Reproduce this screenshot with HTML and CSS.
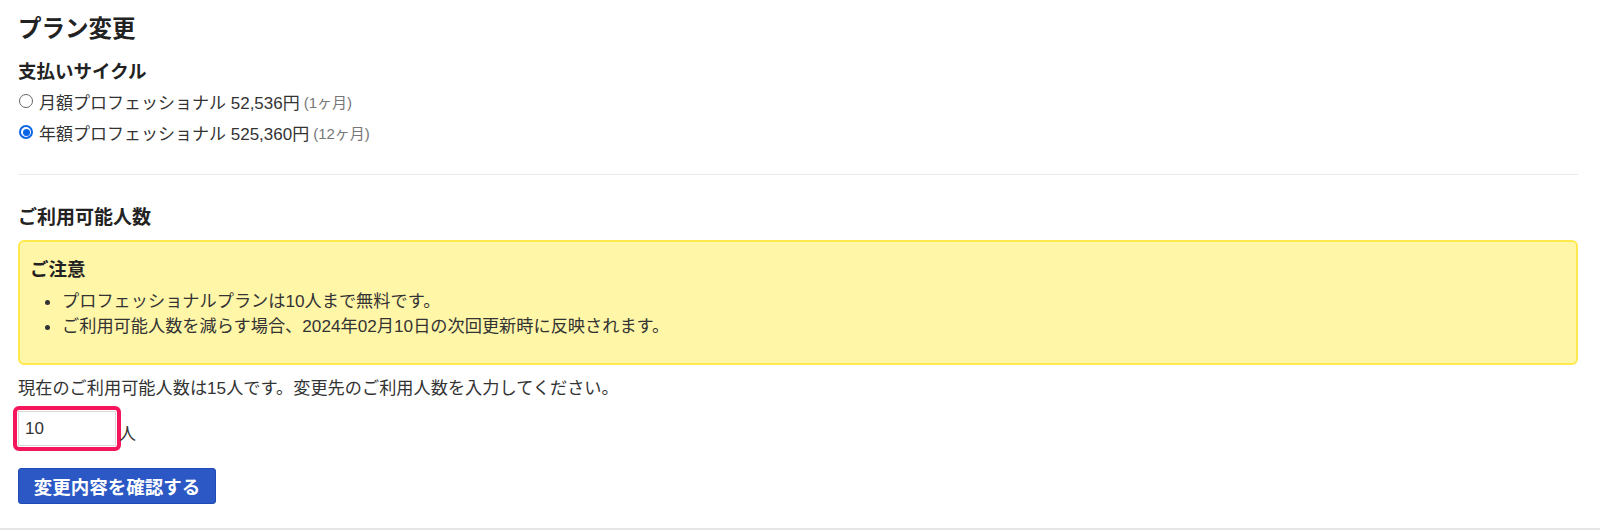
FILE: index.html
```html
<!DOCTYPE html>
<html lang="ja">
<head>
<meta charset="utf-8">
<link rel="stylesheet" href="styles.css">
</head>
<body>
<div class="page">
  <h1 class="title">プラン変更</h1>
  <section class="cycle">
    <h2 class="sub">支払いサイクル</h2>
    <label class="radio-row">
      <span class="radio"></span>
      <span>月額プロフェッショナル 52,536円</span>
      <span class="note">(1ヶ月)</span>
    </label>
    <label class="radio-row">
      <span class="radio checked"></span>
      <span>年額プロフェッショナル 525,360円</span>
      <span class="note">(12ヶ月)</span>
    </label>
  </section>
  <hr class="divider">
  <section class="seats">
    <h3 class="sub3">ご利用可能人数</h3>
    <div class="alert">
      <div class="alert-title">ご注意</div>
      <ul class="alert-list">
        <li>プロフェッショナルプランは10人まで無料です。</li>
        <li>ご利用可能人数を減らす場合、2024年02月10日の次回更新時に反映されます。</li>
      </ul>
    </div>
    <p class="current">現在のご利用可能人数は15人です。変更先のご利用人数を入力してください。</p>
    <div class="input-row">
      <div class="highlight"><span class="field">10</span></div>
      <span class="unit">人</span>
    </div>
    <button class="btn">変更内容を確認する</button>
  </section>
</div>
<div class="footer-line"></div>
</body>
</html>
```

FILE: styles.css
```css
html, body {
  margin: 0;
  padding: 0;
  background: #fff;
}
body {
  font-family: "Liberation Sans", Arial, "Noto Sans CJK JP", sans-serif;
  color: #222;
  height: 530px;
  overflow: hidden;
}
.page {
  width: 1560px;
  padding: 0 0 0 18px;
}
.title {
  margin: 0;
  padding-top: 14px;
  font-size: 23.5px;
  line-height: 30px;
  font-weight: bold;
  color: #222;
}
.sub {
  margin: 15px 0 0;
  font-size: 18.5px;
  line-height: 26px;
  font-weight: bold;
}
.radio-row {
  display: flex;
  align-items: center;
  height: 30px;
  font-size: 17px;
  color: #333;
}
.radio-row:first-of-type {
  margin-top: 1px;
}
.radio-row + .radio-row {
  margin-top: 1px;
}
.radio {
  width: 14px;
  height: 14px;
  border: 1px solid #666;
  border-radius: 50%;
  box-sizing: border-box;
  margin: 0 6px 0 1px;
  flex: none;
  position: relative;
  background: #fff;
}
.radio.checked {
  border: 2px solid #0b65e8;
}
.radio.checked::after {
  content: "";
  position: absolute;
  left: 1.5px;
  top: 1.5px;
  width: 7px;
  height: 7px;
  border-radius: 50%;
  background: #0b65e8;
}
.note {
  font-size: 15px;
  color: #777;
  margin-left: 4px;
}
.divider {
  margin: 27px 0 0;
  border: 0;
  border-top: 1px solid #ebebeb;
  height: 0;
}
.sub3 {
  margin: 31px 0 0;
  font-size: 19px;
  line-height: 24px;
  font-weight: bold;
}
.alert {
  margin-top: 10px;
  background: #fff6a8;
  border: 2px solid #ffe94e;
  border-radius: 6px;
  height: 125px;
  box-sizing: border-box;
  padding: 16px 10px 0;
}
.alert-title {
  font-size: 18.5px;
  line-height: 24px;
  font-weight: bold;
  color: #222;
}
.alert-list {
  margin: 7px 0 0;
  padding-left: 32px;
  font-size: 17.2px;
  line-height: 25px;
  color: #333;
}
.current {
  margin: 11px 0 0;
  font-size: 17.2px;
  line-height: 24px;
  color: #333;
}
.input-row {
  display: flex;
  align-items: center;
  margin-top: 6px;
  margin-left: -5px;
}
.highlight {
  border: 4px solid #f5155c;
  border-radius: 6px;
  width: 108px;
  height: 45px;
  box-sizing: border-box;
  padding: 1px;
}
.field {
  display: flex;
  align-items: center;
  height: 100%;
  box-sizing: border-box;
  border: 1px solid #d8d8d8;
  background: #fff;
  padding-left: 6px;
  font-size: 17px;
  color: #333;
}
.unit {
  font-size: 17px;
  color: #333;
  margin-top: 8px;
  margin-left: -2px;
}
.btn {
  display: block;
  margin-top: 17px;
  width: 198px;
  height: 36px;
  background: #2b58c4;
  border: 1px solid #1f4bb5;
  border-radius: 3px;
  color: #fff;
  font-family: inherit;
  font-size: 18.5px;
  font-weight: bold;
  padding: 0;
  cursor: pointer;
}
.footer-line {
  position: absolute;
  left: 0;
  right: 0;
  top: 528px;
  border-top: 2px solid #e6e6e6;
}
```
